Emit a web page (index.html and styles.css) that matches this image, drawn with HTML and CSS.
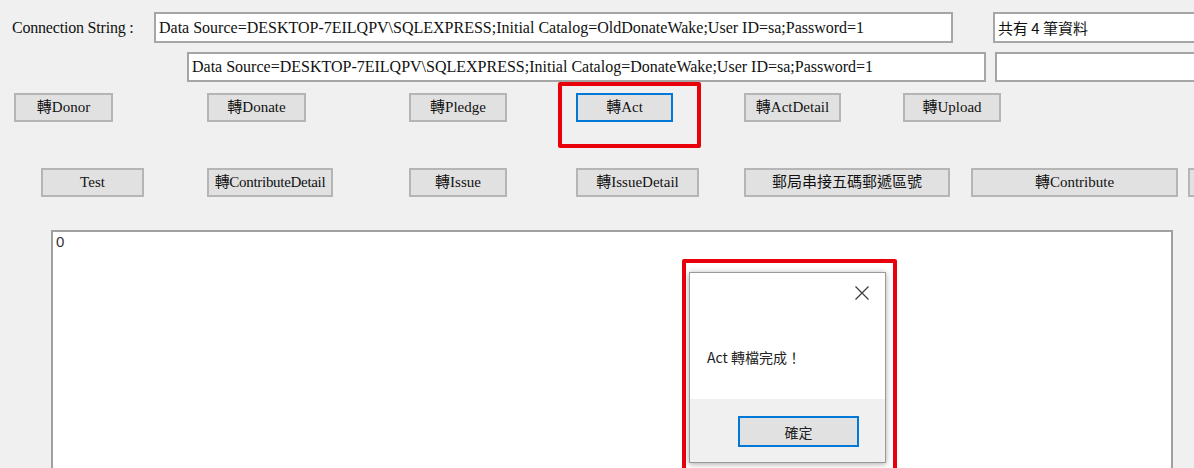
FILE: index.html
```html
<!DOCTYPE html>
<html lang="zh-Hant">
<head>
<meta charset="utf-8">
<title>Convert</title>
<link rel="stylesheet" href="styles.css">
</head>
<body>
<div class="form">
  <div class="row r1">
    <span class="label">Connection String :</span>
    <div class="tb tb-src">Data Source=DESKTOP-7EILQPV\SQLEXPRESS;Initial Catalog=OldDonateWake;User ID=sa;Password=1</div>
    <div class="tb tb-count">共有 4 筆資料</div>
  </div>
  <div class="row r2">
    <div class="tb tb-dst">Data Source=DESKTOP-7EILQPV\SQLEXPRESS;Initial Catalog=DonateWake;User ID=sa;Password=1</div>
    <div class="tb tb-blank"></div>
  </div>
  <div class="row r3">
    <button class="btn b-donor">轉Donor</button>
    <button class="btn b-donate">轉Donate</button>
    <button class="btn b-pledge">轉Pledge</button>
    <span class="act-wrap"><button class="btn b-act focused">轉Act</button></span>
    <button class="btn b-actdetail">轉ActDetail</button>
    <button class="btn b-upload">轉Upload</button>
  </div>
  <div class="row r4">
    <button class="btn b-test">Test</button>
    <button class="btn b-cdetail">轉ContributeDetail</button>
    <button class="btn b-issue">轉Issue</button>
    <button class="btn b-idetail">轉IssueDetail</button>
    <button class="btn b-post">郵局串接五碼郵遞區號</button>
    <button class="btn b-contribute">轉Contribute</button>
    <button class="btn b-more"></button>
  </div>
  <div class="log">0</div>
</div>

<div class="annot-dialog"></div>
<div class="dialog">
  <div class="dlg-body">
    <div class="dlg-close">
      <svg width="16" height="16" viewBox="0 0 16 16"><path d="M1.5 1.5 L14.5 14.5 M14.5 1.5 L1.5 14.5" stroke="#3a3a3a" stroke-width="1.2" fill="none"/></svg>
    </div>
    <div class="dlg-msg">Act 轉檔完成！</div>
  </div>
  <div class="dlg-foot">
    <button class="dlg-ok">確定</button>
  </div>
</div>
</body>
</html>
```

FILE: styles.css
```css
* { box-sizing: border-box; }
html, body {
  margin: 0;
  padding: 0;
}
body {
  width: 1194px;
  height: 468px;
  overflow: hidden;
  background: #f0f0f0;
  font-family: "Liberation Serif", "Noto Sans CJK TC", serif;
  font-size: 16px;
  color: #111;
  position: relative;
}
.form {
  display: flex;
  flex-direction: column;
  width: 1194px;
}
.row {
  display: flex;
  align-items: center;
  flex-shrink: 0;
}
.r1 { margin-top: 12px; height: 31px; }
.r2 { margin-top: 9px; height: 30px; }
.r3 { margin-top: 11px; height: 29px; }
.r4 { margin-top: 46px; height: 29px; }

.label {
  margin-left: 12px;
  width: 142px;
  flex-shrink: 0;
  white-space: nowrap;
  letter-spacing: -0.2px;
}
.tb {
  height: 100%;
  flex-shrink: 0;
  background: #fff;
  border: 2px solid #a6a6a6;
  padding: 0 0 0 3px;
  display: flex;
  align-items: center;
  white-space: nowrap;
  overflow: hidden;
}
.tb-src { width: 799px; }
.tb-count {
  margin-left: 40px;
  width: 230px;
  font-family: "Noto Sans CJK TC", sans-serif;
  font-size: 15px;
}
.tb-dst { margin-left: 187px; width: 799px; }
.tb-blank { margin-left: 9px; width: 230px; }

.btn {
  flex-shrink: 0;
  height: 100%;
  background: #e1e1e1;
  border: 2px solid #b5b5b5;
  font-family: "Liberation Serif", "Noto Sans CJK TC", serif;
  font-size: 15px;
  line-height: 17px;
  color: #111;
  padding: 0 0 1px;
  margin: 0;
  white-space: nowrap;
}
.b-donor { margin-left: 14px; width: 99px; }
.b-donate { margin-left: 94px; width: 99px; }
.b-pledge { margin-left: 103px; width: 98px; }
.act-wrap {
  position: relative;
  display: flex;
  height: 100%;
  margin-left: 69px;
  flex-shrink: 0;
}
.act-wrap::after {
  content: "";
  position: absolute;
  left: -18px;
  top: -11px;
  width: 135px;
  height: 58px;
  border: 4px solid #e8000b;
  border-radius: 2px;
}
.b-act { width: 97px; }
.focused { border-color: #0078d7; }
.b-actdetail { margin-left: 71px; width: 97px; }
.b-upload { margin-left: 62px; width: 98px; }

.b-test { margin-left: 41px; width: 103px; }
.b-cdetail { margin-left: 63px; width: 126px; letter-spacing: -0.3px; }
.b-issue { margin-left: 76px; width: 98px; }
.b-idetail { margin-left: 69px; width: 123px; }
.b-post { margin-left: 45px; width: 206px; }
.b-contribute { margin-left: 21px; width: 207px; }
.b-more { margin-left: 10px; width: 100px; }

.log {
  margin-top: 33px;
  margin-left: 51px;
  width: 1122px;
  height: 260px;
  flex-shrink: 0;
  background: #fff;
  border: 2px solid #a0a0a0;
  border-bottom: none;
  padding: 1px 0 0 3px;
  font-family: "Liberation Sans", sans-serif;
  font-size: 15px;
  color: #333;
}

.annot-dialog {
  position: absolute;
  left: 682px;
  top: 259px;
  width: 215px;
  height: 230px;
  border: 4px solid #e8000b;
  border-radius: 2px;
}
.dialog {
  position: absolute;
  left: 689px;
  top: 272px;
  width: 197px;
  height: 191px;
  border: 1px solid #9a9a9a;
  box-shadow: 0 1px 6px rgba(0, 0, 0, 0.35);
  background: #fff;
  display: flex;
  flex-direction: column;
  font-family: "Noto Sans CJK TC", sans-serif;
}
.dlg-body {
  height: 126px;
  background: #fff;
  display: flex;
  flex-direction: column;
}
.dlg-close {
  align-self: flex-end;
  margin: 12px 15px 0 0;
  width: 16px;
  height: 16px;
  display: flex;
}
.dlg-msg {
  margin: 46px 0 0 17px;
  font-size: 14px;
  color: #222;
}
.dlg-foot {
  flex: 1;
  background: #f0f0f0;
  display: flex;
  padding: 17px 0 0 48px;
}
.dlg-ok {
  width: 121px;
  height: 31px;
  background: #e1e1e1;
  border: 2px solid #0078d7;
  font-family: "Noto Sans CJK TC", sans-serif;
  font-size: 14px;
  color: #222;
  padding: 0;
}
```
